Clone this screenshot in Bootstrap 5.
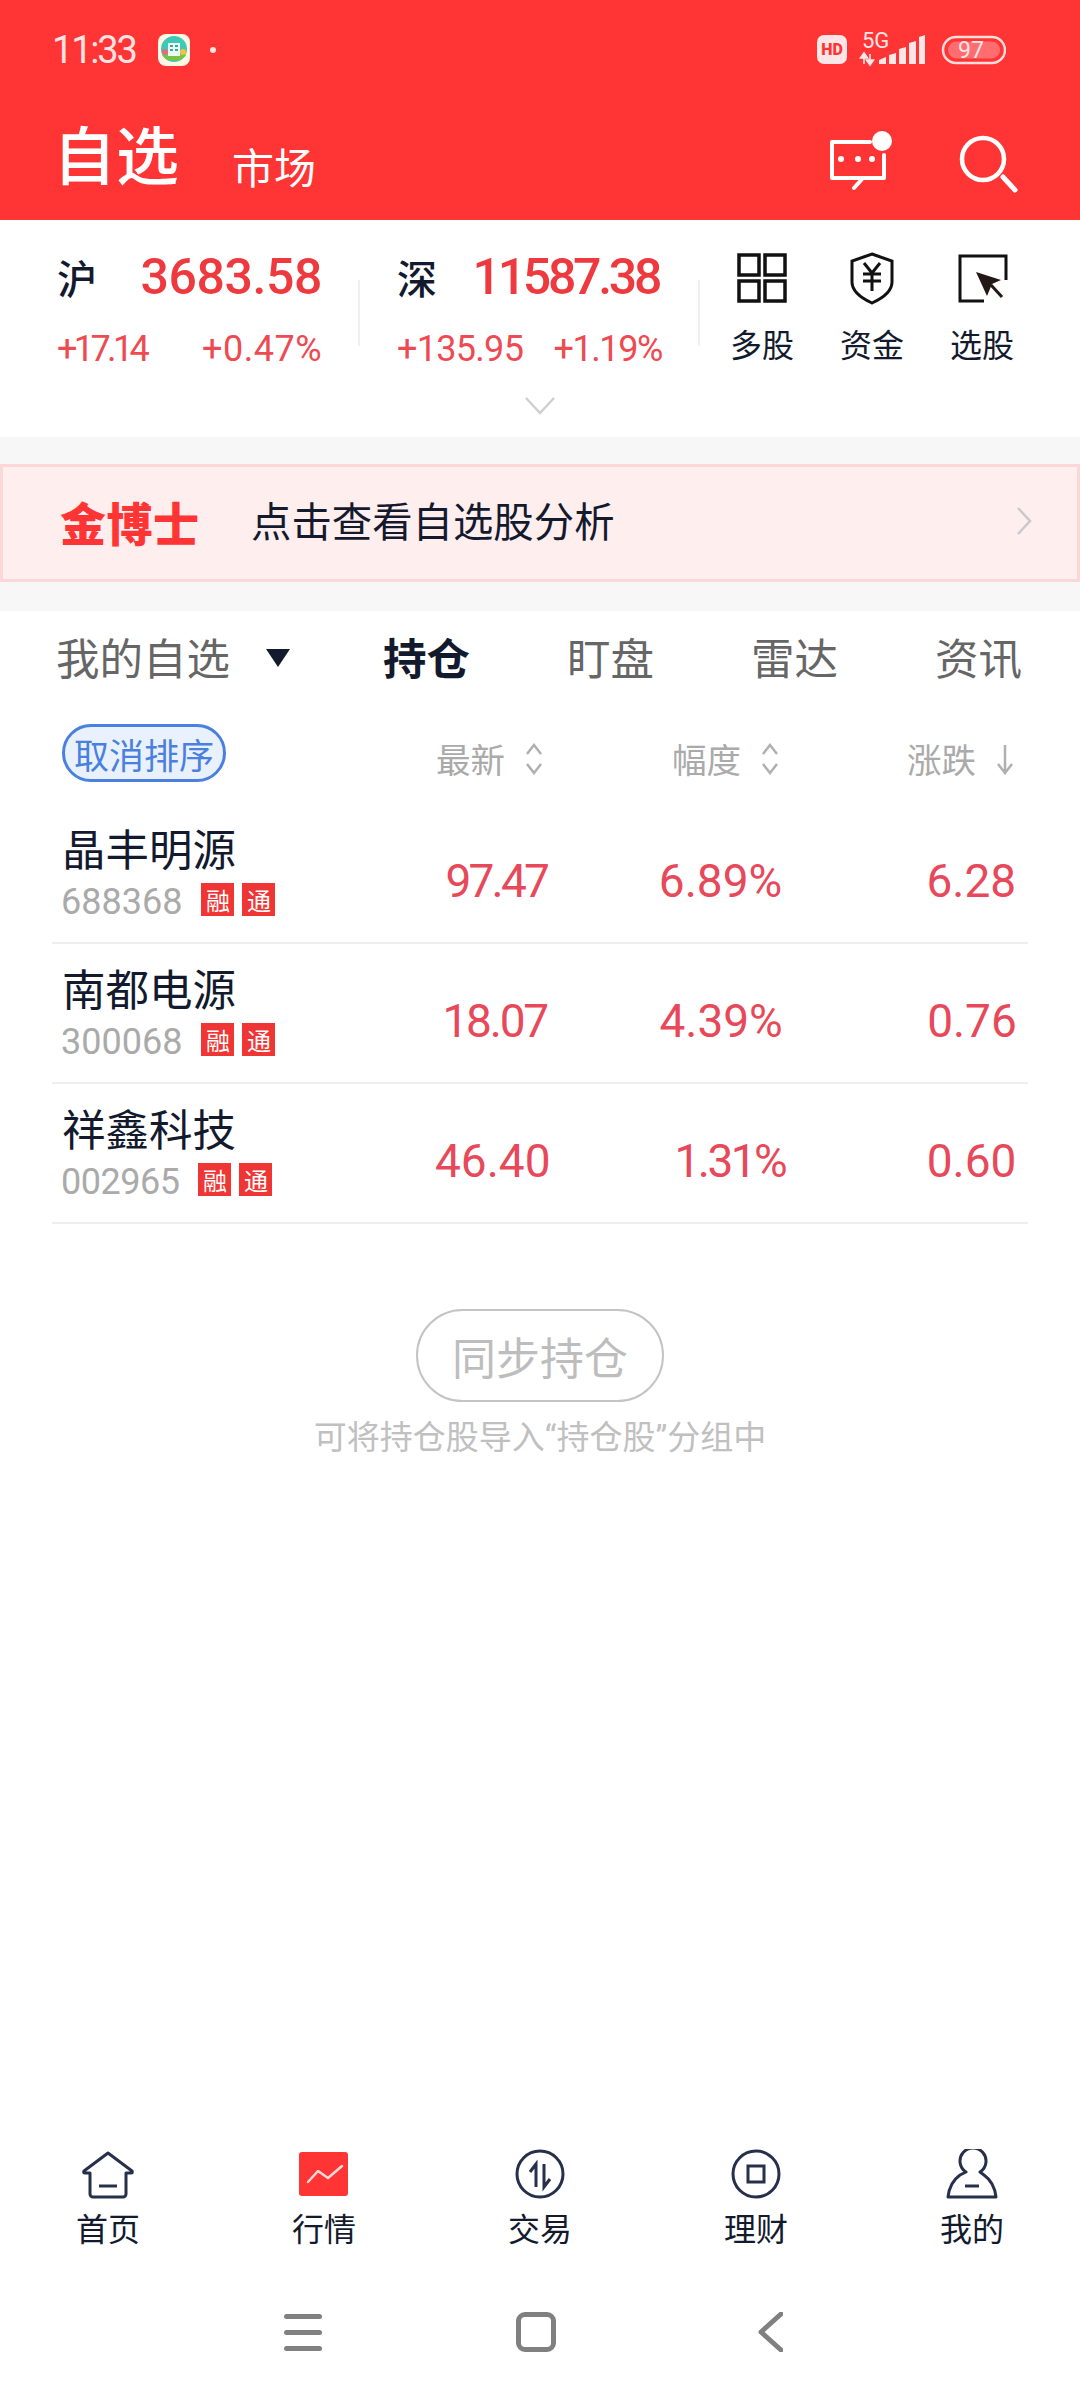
<!DOCTYPE html>
<html lang="zh-CN">
<head>
<meta charset="utf-8">
<title>自选</title>
<link href="https://cdn.jsdelivr.net/npm/bootstrap@5.3.0/dist/css/bootstrap.min.css" rel="stylesheet">
<style>
html,body{margin:0;padding:0;}
body{width:1080px;height:2400px;overflow:hidden;background:#fff;color:#131a2e;font-family:Roboto,"Noto Sans CJK SC",sans-serif;display:flex;flex-direction:column;}
.cjk{font-family:"Noto Sans CJK SC",sans-serif;}
.app-head{height:220px;background:#ff3535;color:#fff;flex:none;}
.status-row{height:100px;padding:0 74px 0 52px;}
.clock{font-size:38px;line-height:1;color:#ffe3e3;letter-spacing:-2.2px;width:89px;}
.app-chip{width:32px;height:32px;margin-left:17px;}
.tiny-dot{width:6px;height:6px;border-radius:50%;background:#ffe3e3;margin-left:20px;}
.title-row{height:120px;padding:0 60px 0 53px;}
.title-main{font-size:63px;font-weight:500;line-height:1;width:131px;margin-bottom:18px;}
.title-sub{font-size:42px;line-height:1;margin-left:48px;margin-top:12px;}
.title-tools{margin-top:5px;}
.quotes{height:217px;flex:none;padding:30px 0 0 57px;position:relative;}
.q-cell{width:265px;}
.q-head{font-size:40px;font-weight:500;line-height:46px;height:46px;margin-top:4px;}
.q-num{font-size:50px;font-weight:500;color:#ee3a3e;letter-spacing:-.4px;font-family:Roboto,sans-serif;}
.q-num-tight{letter-spacing:-3.300px;margin-right:3px;}
.q-sub{font-size:36px;line-height:42px;color:#ee4a52;margin-top:28px;letter-spacing:-.7px;}
.q-loose{letter-spacing:.5px;}
.q-tight{letter-spacing:-3.600px;}
.q-tight2{letter-spacing:-1.400px;}
.q-rule{width:2px;height:66px;background:#f0f0f0;margin:30px 37px 0 36px;flex:none;}
.q-rule.last{margin:30px 0 0 36px;}
.tools{width:331px;margin-left:7px;margin-top:2px;}
.tool{width:110px;text-align:center;font-size:32px;line-height:38px;}
.tool svg{display:block;margin:0 auto 18px;height:54px;width:54px;}
.q-more{position:absolute;left:525px;top:177px;}
.gap-band{height:27px;background:#f7f7f7;flex:none;}
.gap-band.low{height:29px;}
.promo{height:118px;flex:none;background:#ffeeee;border:3px solid #fbd7d7;padding:0 45px 5px 57px;}
.promo-brand{font-size:46px;font-weight:900;color:#ff3535;width:191px;letter-spacing:.5px;line-height:1;}
.promo-text{font-size:40.400px;line-height:1;}
.tabs-row{height:96px;flex:none;padding:0 58px 5px 56px;font-size:43.500px;color:#666;}
.tab-first{width:327px;}
.tab-tri{width:0;height:0;border-left:12px solid transparent;border-right:12px solid transparent;border-top:18px solid #131a2e;margin-left:36px;margin-top:3px;}
.tab-on{color:#131a2e;font-weight:700;width:184px;}
.tab-off{width:184px;}
.tab-end{width:85px;white-space:nowrap;}
.sort-row{height:97px;flex:none;padding:0 52px 5px 62px;}
.pill-off{height:58px;width:164px;border:3px solid #4a80e0;background:#e9f1fd;border-radius:29px;color:#4a80e0;font-size:35px;line-height:1;white-space:nowrap;}
.sort-col{font-size:34.500px;color:#aaa;line-height:1;margin-top:11px;}
.sort-col svg{margin-left:20px;}
.s1{width:446px;padding-left:210px;}
.s2{width:235px;}
.s3{flex:1;}
.stock-list{margin:0 52px;}
.stock-row{height:140px;border-bottom:2px solid #efefef;padding:0 0 0 9px;}
.stock-left{width:374px;padding-top:12px;}
.stock-name{font-size:43.500px;line-height:1;margin-top:-12px;margin-left:1px;}
.stock-code{font-size:36px;color:#aaa;line-height:1;}
.code-tight{letter-spacing:-.5px;}
.stock-meta{margin-top:14px;}
.tag-red{width:33px;height:33px;background:#f03535;color:#fff;font-size:24px;line-height:1;margin-left:8px;margin-bottom:4px;}
.tag-red.first{margin-left:19px;}
.num-col{font-size:46px;color:#e8495a;text-align:right;line-height:1;padding-top:16px;font-family:Roboto,sans-serif;}
.n1{width:112px;}.n2{width:238px;}.n3{width:234px;}
.narrow-a{letter-spacing:-2.800px;margin-right:-2.800px;}
.narrow-b{letter-spacing:-2.200px;margin-right:-2.200px;}
.narrow-c{letter-spacing:-2.600px;margin-right:-2.600px;}
.sync-wrap{margin-top:85px;}
.sync-btn{width:248px;height:93px;border:2px solid #c4c4c4;border-radius:47px;font-size:44px;color:#bdbdbd;line-height:1;background:#fff;padding:0;}
.sync-hint{font-family:Roboto,"Noto Sans CJK SC",sans-serif;font-size:33px;color:#c0c0c0;line-height:1;margin-top:19px;}
.tabbar{margin-top:auto;height:133px;padding-bottom:3px;flex:none;}
.bar-item{width:216px;text-align:center;font-size:32px;line-height:38px;color:#131a2e;}
.bar-item svg{display:block;margin:0 auto 5px;width:54px;height:54px;}
.sys-bar{height:118px;flex:none;padding:0 13px 18px 0;}
.sys-menu{width:38px;}
.sys-menu span{display:block;height:5px;border-radius:3px;background:#808080;margin-bottom:11px;}
.sys-menu span:last-child{margin-bottom:0;}
.sys-home{width:40px;height:40px;border:5px solid #808080;border-radius:9px;margin:0 201px 0 194px;}
</style>
</head>
<body>

<header class="app-head">
  <div class="status-row d-flex align-items-center">
    <span class="clock">11:33</span>
    <svg class="app-chip" viewBox="0 0 32 32" aria-hidden="true">
      <rect width="32" height="32" rx="8" fill="#fff7e6"/>
      <circle cx="16" cy="15" r="13" fill="#3fc8b5"/>
      <path d="M4 21h24a13 9 0 0 1-24 0z" fill="#7cc23e"/>
      <rect x="10" y="9" width="12" height="13" fill="#e9fbf8"/>
      <path d="M12 12h3M17 12h3M12 16h3M17 16h3" stroke="#3fa896" stroke-width="2"/>
      <circle cx="25" cy="18" r="3" fill="#f3c33d"/><circle cx="7" cy="18" r="3" fill="#e8697c"/>
    </svg>
    <span class="tiny-dot"></span>
    <div class="ms-auto d-flex align-items-center">
      <svg width="190" height="44" viewBox="0 -4 190 44" aria-hidden="true">
        <rect x="1" y="3" width="30" height="29" rx="7" fill="#ffe6e6"/>
        <text x="16" y="23" text-anchor="middle" font-family="Roboto" font-weight="900" font-size="16" fill="#ff3535">HD</text>
        <text x="46" y="16" font-family="Roboto" font-size="22" fill="#ffe6e6">5G</text>
        <path d="M48 22v10M44.500 26h7l-3.500-5zM54 32V22M50.500 28h7l-3.500 5z" stroke="#ffe6e6" stroke-width="1.600" fill="#ffe6e6"/>
        <path d="M63 32v-4l7-3v7zM73 32V23l7-2v11zM83 32V17l7-2v17zM93 32V11l7-2v23zM103 32V5l6-2v29z" fill="#ffe6e6"/>
        <rect x="127" y="5" width="62" height="26" rx="13" fill="none" stroke="#ffdcdc" stroke-width="2.500"/>
        <rect x="132" y="9.500" width="52" height="17" rx="8.500" fill="#ff6d70"/>
        <text x="155" y="26" text-anchor="middle" font-family="Roboto" font-size="23" fill="#ffe6e6">97</text>
      </svg>
    </div>
  </div>
  <div class="title-row d-flex align-items-center">
    <span class="title-main cjk">自选</span>
    <span class="title-sub cjk">市场</span>
    <div class="title-tools ms-auto d-flex align-items-center">
      <svg width="190" height="65" viewBox="0 0 190 65" aria-hidden="true">
        <path d="M40 12H2v36h31l-9 10M54 25v23H33" fill="none" stroke="#fff" stroke-width="4" stroke-linecap="round" stroke-linejoin="round"/>
        <circle cx="11" cy="29" r="3" fill="#fff"/><circle cx="28" cy="29" r="3" fill="#fff"/><circle cx="42" cy="29" r="3" fill="#fff"/>
        <circle cx="52" cy="11" r="10" fill="#fff"/>
        <circle cx="153" cy="29" r="21" fill="none" stroke="#fff" stroke-width="4.500"/>
        <path d="M173 47l12 13" stroke="#fff" stroke-width="5" stroke-linecap="round"/>
      </svg>
    </div>
  </div>
</header>

<section class="quotes d-flex align-items-start">
  <div class="q-cell">
    <div class="q-head d-flex justify-content-between"><span class="cjk">沪</span><span class="q-num">3683.58</span></div>
    <div class="q-sub d-flex justify-content-between"><span class="q-tight">+17.14</span><span class="q-loose">+0.47%</span></div>
  </div>
  <span class="q-rule"></span>
  <div class="q-cell">
    <div class="q-head d-flex justify-content-between"><span class="cjk">深</span><span class="q-num q-num-tight">11587.38</span></div>
    <div class="q-sub d-flex justify-content-between"><span>+135.95</span><span class="q-tight2">+1.19%</span></div>
  </div>
  <span class="q-rule last"></span>
  <div class="tools d-flex">
    <div class="tool cjk">
      <svg viewBox="0 0 54 54" aria-hidden="true"><g fill="none" stroke="#111" stroke-width="3.500"><rect x="4" y="3" width="20" height="20"/><rect x="30" y="3" width="20" height="20"/><rect x="4" y="29" width="20" height="20"/><rect x="30" y="29" width="20" height="20"/></g></svg>
      多股
    </div>
    <div class="tool cjk">
      <svg viewBox="0 0 54 54" aria-hidden="true"><path d="M27 2l20 7v21c0 9-9 16-20 21C16 46 7 39 7 30V9z" fill="none" stroke="#111" stroke-width="3"/><path d="M19 11l8 10 8-10M18 22h18M18 29h18M27 21v18" fill="none" stroke="#111" stroke-width="3"/></svg>
      资金
    </div>
    <div class="tool cjk">
      <svg viewBox="0 0 54 54" aria-hidden="true"><path d="M29 49H5V4h46v24" fill="none" stroke="#111" stroke-width="3"/><path d="M21 20l25 8-9 4-5 12z" fill="#231815"/><path d="M36 33l11 12" stroke="#231815" stroke-width="3"/></svg>
      选股
    </div>
  </div>
  <svg class="q-more" width="30" height="18" viewBox="0 0 30 18" aria-hidden="true"><path d="M1 1l14 15L29 1" fill="none" stroke="#cfcfcf" stroke-width="2.500"/></svg>
</section>

<div class="gap-band"></div>
<div class="promo d-flex align-items-center">
  <span class="promo-brand cjk">金博士</span>
  <span class="promo-text cjk">点击查看自选股分析</span>
  <svg class="ms-auto" width="16" height="28" viewBox="0 0 16 28" aria-hidden="true"><path d="M2 1l12 13L2 27" fill="none" stroke="#c9c9c9" stroke-width="2.500"/></svg>
</div>
<div class="gap-band low"></div>

<nav class="tabs-row d-flex align-items-center cjk">
  <div class="tab-first d-flex align-items-center"><span>我的自选</span><span class="tab-tri"></span></div>
  <span class="tab-on">持仓</span>
  <span class="tab-off">盯盘</span>
  <span class="tab-off">雷达</span>
  <span class="tab-end">资讯</span>
</nav>

<div class="sort-row d-flex align-items-center cjk">
  <span class="pill-off d-flex align-items-center justify-content-center">取消排序</span>
  <div class="sort-col s1 d-flex align-items-center"><span>最新</span>
    <svg width="18" height="32" viewBox="0 0 18 32" aria-hidden="true"><path d="M2 11l7-9 7 9M2 21l7 9 7-9" fill="none" stroke="#b0b0b0" stroke-width="2.500"/></svg></div>
  <div class="sort-col s2 d-flex align-items-center"><span>幅度</span>
    <svg width="18" height="32" viewBox="0 0 18 32" aria-hidden="true"><path d="M2 11l7-9 7 9M2 21l7 9 7-9" fill="none" stroke="#b0b0b0" stroke-width="2.500"/></svg></div>
  <div class="sort-col s3 d-flex align-items-center"><span>涨跌</span>
    <svg width="18" height="32" viewBox="0 0 18 32" aria-hidden="true"><path d="M9 2v27M2 21l7 9 7-9" fill="none" stroke="#b0b0b0" stroke-width="2.500"/></svg></div>
</div>

<main class="stock-list">
  <div class="stock-row d-flex align-items-center">
    <div class="stock-left">
      <div class="stock-name cjk">晶丰明源</div>
      <div class="stock-meta d-flex align-items-end"><span class="stock-code">688368</span><span class="tag-red first d-flex align-items-center justify-content-center cjk">融</span><span class="tag-red d-flex align-items-center justify-content-center cjk">通</span></div>
    </div>
    <div class="num-col n1 narrow-a">97.47</div><div class="num-col n2">6.89%</div><div class="num-col n3">6.28</div>
  </div>
  <div class="stock-row d-flex align-items-center">
    <div class="stock-left">
      <div class="stock-name cjk">南都电源</div>
      <div class="stock-meta d-flex align-items-end"><span class="stock-code">300068</span><span class="tag-red first d-flex align-items-center justify-content-center cjk">融</span><span class="tag-red d-flex align-items-center justify-content-center cjk">通</span></div>
    </div>
    <div class="num-col n1 narrow-b">18.07</div><div class="num-col n2">4.39%</div><div class="num-col n3">0.76</div>
  </div>
  <div class="stock-row d-flex align-items-center">
    <div class="stock-left">
      <div class="stock-name cjk">祥鑫科技</div>
      <div class="stock-meta d-flex align-items-end"><span class="stock-code code-tight">002965</span><span class="tag-red first d-flex align-items-center justify-content-center cjk">融</span><span class="tag-red d-flex align-items-center justify-content-center cjk">通</span></div>
    </div>
    <div class="num-col n1">46.40</div><div class="num-col n2 narrow-c">1.31%</div><div class="num-col n3">0.60</div>
  </div>
</main>

<div class="sync-wrap d-flex flex-column align-items-center cjk">
  <button type="button" class="sync-btn cjk">同步持仓</button>
  <div class="sync-hint">可将持仓股导入“持仓股”分组中</div>
</div>

<nav class="tabbar d-flex cjk">
  <div class="bar-item">
    <svg viewBox="0 0 54 54" aria-hidden="true"><path d="M27 4L3 22q-1 2 1 2h5v21a3 3 0 0 0 3 3h30a3 3 0 0 0 3-3V24h5q2 0 1-2z" fill="none" stroke="#27304a" stroke-width="3" stroke-linejoin="round"/><path d="M18 37h18" stroke="#27304a" stroke-width="3"/></svg>
    首页
  </div>
  <div class="bar-item">
    <svg viewBox="0 0 54 54" aria-hidden="true"><rect x="2" y="3" width="49" height="44" rx="3" fill="#ff3535"/><path d="M11 33l10-11 10 7 14-12" fill="none" stroke="#ffd9d9" stroke-width="2.500" stroke-linecap="round" stroke-linejoin="round"/></svg>
    行情
  </div>
  <div class="bar-item">
    <svg viewBox="0 0 54 54" aria-hidden="true"><circle cx="27" cy="25" r="23" fill="none" stroke="#27304a" stroke-width="3"/><path d="M23 38V15l-6 8M31 15v23l6-8" fill="none" stroke="#27304a" stroke-width="3"/></svg>
    交易
  </div>
  <div class="bar-item">
    <svg viewBox="0 0 54 54" aria-hidden="true"><circle cx="27" cy="25" r="23" fill="none" stroke="#27304a" stroke-width="3"/><rect x="19" y="17" width="16" height="16" fill="none" stroke="#27304a" stroke-width="3"/></svg>
    理财
  </div>
  <div class="bar-item">
    <svg viewBox="0 0 54 54" aria-hidden="true"><path d="M21 23a13 13 0 1 1 14 0l4 3c7 5 11 13 12 22H3c1-9 5-17 12-22z" fill="none" stroke="#27304a" stroke-width="3" stroke-linejoin="round"/><path d="M20 37h14" stroke="#27304a" stroke-width="3"/></svg>
    我的
  </div>
</nav>

<div class="sys-bar d-flex align-items-center justify-content-center">
  <div class="sys-menu"><span></span><span></span><span></span></div>
  <div class="sys-home"></div>
  <svg width="26" height="40" viewBox="0 0 26 40" aria-hidden="true"><path d="M24 2L4 20l20 18" fill="none" stroke="#808080" stroke-width="5" stroke-linecap="round" stroke-linejoin="round"/></svg>
</div>

<script src="https://cdn.jsdelivr.net/npm/bootstrap@5.3.0/dist/js/bootstrap.bundle.min.js"></script>
</body>
</html>
